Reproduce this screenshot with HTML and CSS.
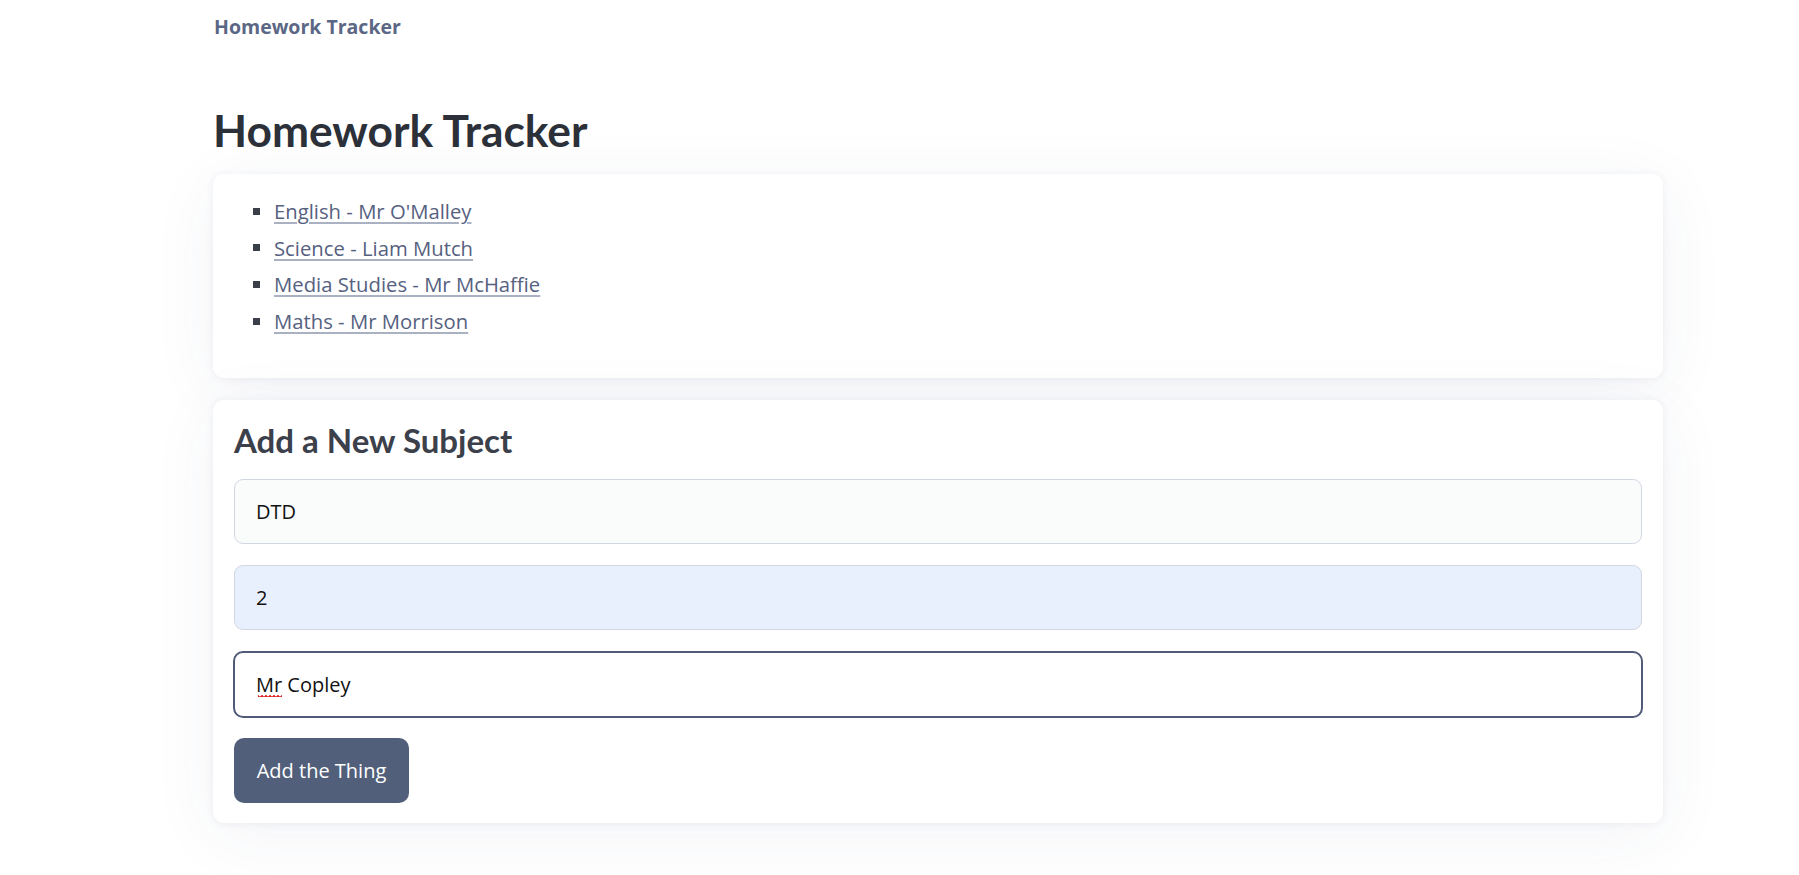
FILE: index.html
```html
<!DOCTYPE html>
<html lang="en">
<head>
<meta charset="utf-8">
<title>Homework Tracker</title>
<link rel="stylesheet" href="styles.css">
</head>
<body>
<div class="page">
  <nav class="nav"><span class="brand">Homework Tracker</span></nav>
  <h1 class="title">Homework Tracker</h1>
  <section class="card list-card">
    <ul class="subjects">
      <li><a href="#">English - Mr O'Malley</a></li>
      <li><a href="#">Science - Liam Mutch</a></li>
      <li><a href="#">Media Studies - Mr McHaffie</a></li>
      <li><a href="#">Maths - Mr Morrison</a></li>
    </ul>
  </section>
  <section class="card form-card">
    <h2 class="form-title">Add a New Subject</h2>
    <form class="form">
      <input class="field" type="text" value="DTD">
      <input class="field autofill" type="text" value="2">
      <div class="field-wrap">
        <input class="field focused" type="text" value="Mr Copley">
        <span class="squiggle"></span>
      </div>
      <button class="btn" type="button">Add the Thing</button>
    </form>
  </section>
</div>
</body>
</html>
```
FILE: styles.css
```css
* { box-sizing: border-box; }
html, body { margin: 0; padding: 0; background: #ffffff; }
body {
  font-family: "Open Sans", "Noto Sans", sans-serif;
  color: #2b3039;
  width: 1799px;
  height: 875px;
  overflow: hidden;
}
.page {
  margin-left: 213px;
  width: 1450px;
}
.nav {
  padding-top: 15px;
  height: 39px;
}
.brand {
  display: block;
  font-size: 19.5px;
  line-height: 24px;
  font-weight: 700;
  color: #5b6785;
  padding-left: 1px;
}
.title {
  margin: 0;
  padding-top: 64px;
  font-family: "Lato", "Open Sans", sans-serif;
  font-size: 44.3px;
  line-height: 54px;
  font-weight: 700;
  color: #2b3039;
  height: 135px;
}
.card {
  background: #ffffff;
  border-radius: 11px;
  box-shadow: 0 1px 8px rgba(50, 60, 120, 0.07), 0 12px 70px rgba(50, 60, 120, 0.06);
}
.list-card {
  height: 204px;
  padding-top: 19px;
  margin-bottom: 22px;
}
.subjects {
  list-style: none;
  margin: 0;
  padding: 0 0 0 40px;
}
.subjects li {
  display: flex;
  align-items: center;
  height: 36.6px;
  font-size: 20.3px;
}
.subjects li::before {
  content: "";
  width: 7px;
  height: 7px;
  background: #3a3f4a;
  margin-right: 14px;
  flex: none;
}
.subjects a {
  color: #56617f;
  text-decoration: underline;
  text-decoration-color: #a9b1c3;
  text-decoration-thickness: 2px;
  text-underline-offset: 3px;
}
.form-card {
  height: 423px;
  padding: 20px 21px;
}
.form-title {
  margin: 0 0 19px 0;
  font-family: "Lato", "Open Sans", sans-serif;
  font-size: 33px;
  line-height: 40px;
  font-weight: 700;
  color: #3b404b;
}
.form {
  display: flex;
  flex-direction: column;
  gap: 21px;
  align-items: stretch;
}
.field-wrap { position: relative; }
.field {
  display: block;
  width: 100%;
  height: 65px;
  border: 1px solid #d2d8e3;
  border-radius: 9px;
  background: #fafbfb;
  padding: 0 21px;
  font-family: inherit;
  font-size: 20px;
  color: #111111;
  outline: none;
}
.field.autofill {
  background: #e8f0fe;
}
.field.focused {
  width: calc(100% + 2px);
  margin-left: -1px;
  height: 67px;
  background: #ffffff;
  border: 2px solid #4f5b77;
  border-radius: 10px;
  padding: 0 21px;
}
.squiggle {
  position: absolute;
  left: 23.5px;
  top: 44px;
  width: 24px;
  height: 4px;
  background: radial-gradient(circle at 2px 0, transparent 1.5px, #e02020 1.6px, #e02020 2.4px, transparent 2.5px) 0 0 / 4px 4px repeat-x;
}
.btn {
  align-self: flex-start;
  margin-top: -1px;
  width: 175px;
  height: 65px;
  border: none;
  border-radius: 10px;
  background: #525f7a;
  color: #ffffff;
  font-family: inherit;
  font-size: 20px;
  padding: 0;
}
```
